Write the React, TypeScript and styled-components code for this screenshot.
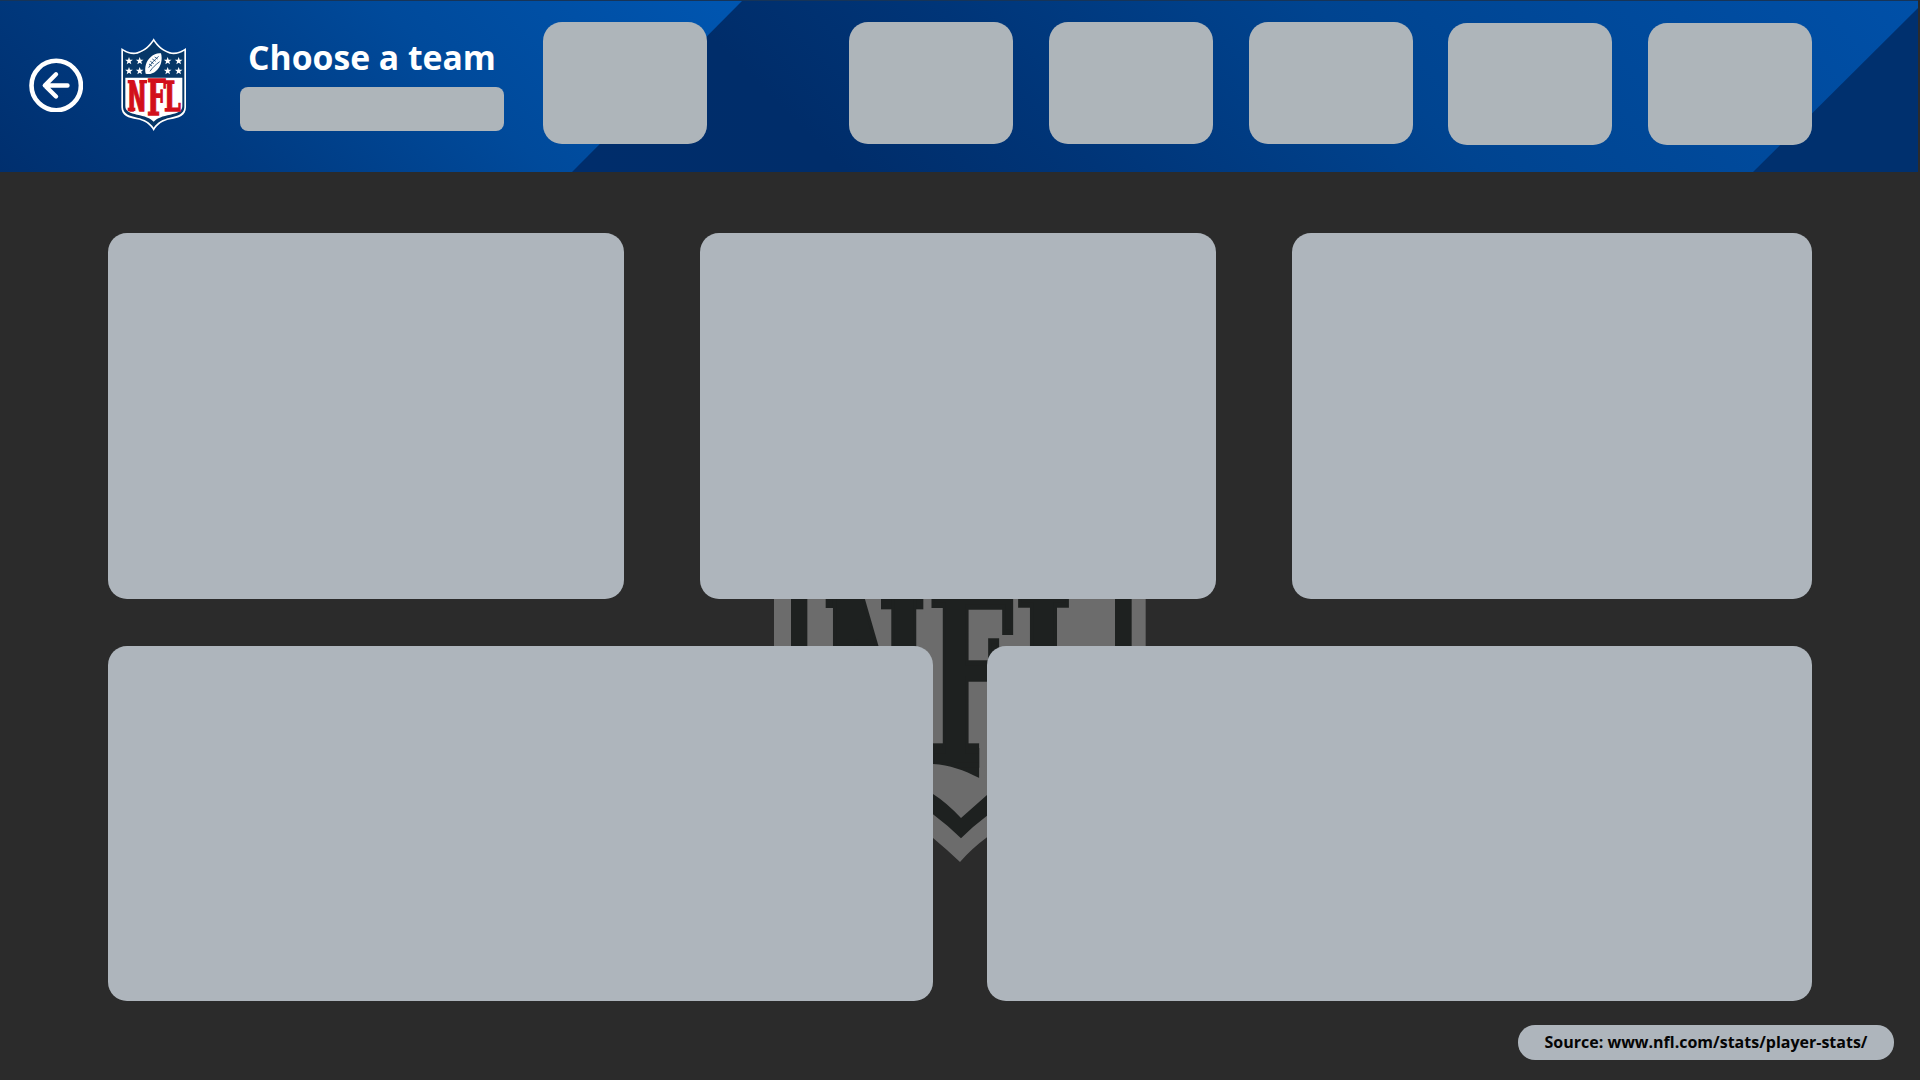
import React from "react";
import styled, { createGlobalStyle } from "styled-components";

const GlobalStyle = createGlobalStyle`
  *, *::before, *::after { box-sizing: border-box; }
  body { margin: 0; background: #2b2b2b; }
`;

const sans = `"Open Sans", "Noto Sans", sans-serif`;

const Page = styled.div`
  position: relative;
  isolation: isolate;
  width: 1920px;
  height: 1080px;
  overflow: hidden;
  background: #2b2b2b;
  font-family: ${sans};
`;

const Header = styled.header`
  position: relative;
  z-index: 0;
  display: flex;
  align-items: flex-start;
  width: 1918px;
  height: 172px;
  padding-left: 29px;
  background: #00306e;
  &::before,
  &::after {
    content: "";
    position: absolute;
    top: 0;
    height: 172px;
  }
  &::before {
    z-index: -1;
    left: 0;
    width: 743px;
    background: linear-gradient(45deg, #002f6e 0%, #003a80 27%, #004a9b 60%, #0056b1 100%);
    clip-path: polygon(0 0, 100% 0, 572px 100%, 0 100%);
  }
  &::after {
    z-index: -2;
    left: 572px;
    width: 1346px;
    background: linear-gradient(45deg, #002d6b 0%, #002d6a 18%, #003578 35%, #004490 60%, #0050a8 100%);
    clip-path: polygon(0 0, 100% 0, 100% 8px, 1181px 100%, 0 100%);
  }
`;

const TopEdge = styled.div`
  position: absolute;
  inset: 0 0 auto 0;
  height: 1px;
  background: #173457;
`;

const BackButton = styled.button`
  width: 54px;
  height: 54px;
  margin-top: 58px;
  padding: 0;
  border: 0;
  background: none;
  svg { display: block; }
`;

const LogoSlot = styled.div`
  width: 90px;
  height: 110px;
  margin: 30px 0 0 27px;
  svg { display: block; }
`;

const TeamPicker = styled.div`
  display: flex;
  flex-direction: column;
  align-items: center;
  width: 264px;
  margin: 35px 0 0 40px;
`;

const Title = styled.h1`
  margin: 0;
  height: 52px;
  font-size: 33.7px;
  line-height: 44px;
  font-weight: 700;
  white-space: nowrap;
  color: #fff;
`;

const Select = styled.div`
  width: 264px;
  height: 44px;
  border-radius: 8px;
  background: #aeb5ba;
`;

const Tile = styled.div<{ $gap: number; $drop?: boolean }>`
  width: 164px;
  height: 122px;
  margin: ${(p) => (p.$drop ? 23 : 22)}px 0 0 ${(p) => p.$gap}px;
  border-radius: 19px;
  background: #aeb5ba;
`;

const Board = styled.main`
  position: relative;
  z-index: 0;
  display: flex;
  flex-direction: column;
  gap: 47px;
  width: 1704px;
  margin: 61px 0 0 108px;
`;

const Row = styled.section<{ $cols: string; $gap: number; $height: number }>`
  display: grid;
  grid-template-columns: ${(p) => p.$cols};
  column-gap: ${(p) => p.$gap}px;
  height: ${(p) => p.$height}px;
`;

const Card = styled.div`
  border-radius: 19px;
  background: #aeb5bc;
`;

const Watermark = styled.svg`
  position: absolute;
  z-index: -1;
  left: 642px;
  top: 247px;
  width: 420px;
  height: 390px;
`;

const Footer = styled.footer`
  display: flex;
  justify-content: flex-end;
  padding: 24px 26px 0 0;
`;

const Source = styled.div`
  display: flex;
  align-items: center;
  justify-content: center;
  width: 376px;
  height: 35px;
  padding-bottom: 1px;
  border-radius: 17px;
  background: #aeb5bc;
  color: #050505;
  font-size: 16px;
  font-weight: 700;
  white-space: nowrap;
`;

type LetterProps = { ch: string; x: number; y: number; size: number; sx: number; family?: string };

const Letter = ({ ch, x, y, size, sx, family = "DejaVu Serif" }: LetterProps) => (
  <text
    transform={`translate(${x} ${y}) scale(${sx} 1)`}
    fontFamily={`"${family}", serif`}
    fontWeight={700}
    fontSize={size}
  >
    {ch}
  </text>
);

const star = "M0-12 3-4 11.5-4 4.7 1.5 7 10 0 5-7 10-4.7 1.5-11.5-4-3-4Z";

const Logo = () => (
  <svg width="90" height="110" viewBox="0 0 270 330">
    <path
      d="M131 25C121 43 105 59 82 66C65 71 48 64 34 54V232C34 257 56 265 80 268C103 272 120 283 131 303C142 283 159 272 182 268C206 265 228 257 228 232V54C214 64 197 71 180 66C157 59 141 43 131 25Z"
      fill="#fff"
    />
    <path
      d="M131 34C121 49 106 64 83 71C67 75 52 70 39 62V232C39 252 60 259 82 263C103 267 121 277 131 293C141 277 159 267 180 263C202 259 223 252 223 232V62C210 70 195 75 179 71C156 64 141 49 131 34Z"
      fill="#063767"
    />
    <path d="M46 143H217V229C217 244 201 250 181 254C158 258 141 264 131 275C121 264 104 258 81 254C61 250 46 244 46 229Z" fill="#fff" />
    <g fill="#fff">
      {[57, 89, 173, 206].map((x) =>
        [93, 123].map((y) => <path key={`${x}-${y}`} d={star} transform={`translate(${x} ${y})`} />)
      )}
      <path d="M153 70C158 88 154 110 138 123C128 132 116 134 107 131C103 112 108 93 123 80C132 72 143 68 153 70Z" />
    </g>
    <path d="M146 79C137 87 124 99 116 113M121 94l10 7M127 87l10 7M134 81l9 6M117 102l9 6M120 124C127 113 137 104 149 95" fill="none" stroke="#063767" strokeWidth="2.4" />
    <g fill="#d20f1b">
      <rect x="53" y="150" width="18" height="10" />
      <rect x="88" y="150" width="23" height="10" />
      <rect x="53" y="233" width="23" height="10" />
      <g stroke="#d20f1b" strokeWidth="4">
        <Letter ch="N" x={53} y={242} size={124} sx={0.53} family="DejaVu Sans" />
        <Letter ch="F" x={111} y={255} size={143} sx={0.56} />
        <Letter ch="L" x={162} y={242} size={124} sx={0.58} />
      </g>
    </g>
  </svg>
);

const ShieldWatermark = () => (
  <Watermark viewBox="0 -300 1260 1170">
    <path d="M72 0H1187V470C1187 590 1060 610 900 650C810 675 760 722 711 772Q665 806 630 846Q590 808 549 774C500 722 450 675 360 650C200 610 72 590 72 470Z" fill="#6c6c6c" />
    <path d="M123 0H1145V450C1145 550 1020 570 880 600C800 625 760 668 711 707Q668 739 633 775Q592 735 549 703C500 668 460 625 380 600C240 570 123 550 123 450Z" fill="#1e2120" />
    <path d="M172 0H1095V430C1095 510 980 530 860 560C790 580 750 610 711 645L633 714Q590 668 549 642C510 610 470 580 400 560C280 530 172 510 172 430Z" fill="#6c6c6c" />
    <g fill="#1e2120">
      <rect x="227" y="30" width="60" height="54" />
      <rect x="393" y="30" width="127" height="58" />
      <rect x="505" y="490" width="183" height="106" />
      <g stroke="#1e2120" strokeWidth="17">
        <Letter ch="N" x={219.6} y={520} size={672} sx={0.548} family="DejaVu Sans" />
        <Letter ch="F" x={532} y={556} size={713} sx={0.51} />
        <Letter ch="L" x={791} y={530} size={680} sx={0.56} />
      </g>
    </g>
    <path d="M500 552H549C600 555 640 570 688 594V490H704V610H500Z" fill="#6c6c6c" />
  </Watermark>
);

export default function App() {
  return (
    <Page>
      <GlobalStyle />
      <Header>
        <TopEdge />
        <BackButton aria-label="Back">
          <svg width="54" height="54" viewBox="0 0 54 54" fill="none" stroke="#fff" strokeLinecap="round" strokeLinejoin="round">
            <circle cx="27.2" cy="27.5" r="24.7" strokeWidth="4.6" />
            <path d="M38.5 27.5H16M27 16.3 15.8 27.5 27 38.5" strokeWidth="4.4" />
          </svg>
        </BackButton>
        <LogoSlot>
          <Logo />
        </LogoSlot>
        <TeamPicker>
          <Title>Choose a team</Title>
          <Select />
        </TeamPicker>
        <Tile $gap={39} />
        <Tile $gap={142} />
        <Tile $gap={36} />
        <Tile $gap={36} />
        <Tile $gap={35} $drop />
        <Tile $gap={36} $drop />
      </Header>
      <Board>
        <ShieldWatermark />
        <Row $cols="516px 516px 520px" $gap={76} $height={366}>
          <Card />
          <Card />
          <Card />
        </Row>
        <Row $cols="825px 825px" $gap={54} $height={355}>
          <Card />
          <Card />
        </Row>
      </Board>
      <Footer>
        <Source>Source: www.nfl.com/stats/player-stats/</Source>
      </Footer>
    </Page>
  );
}
